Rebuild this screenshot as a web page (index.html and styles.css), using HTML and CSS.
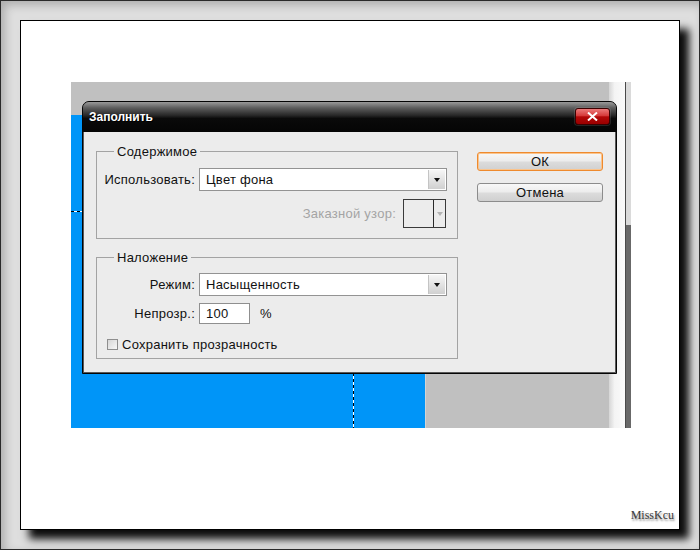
FILE: index.html
```html
<!DOCTYPE html>
<html>

<head>
    <meta charset="utf-8">
    <title>Заполнить</title>
    <link rel="stylesheet" href="styles.css">
</head>

<body>
    <div class="desk">
        <div class="paper">
            <div class="shot">
                <div class="canvas">
                    <div class="canvas-top"></div>
                    <div class="canvas-floor">
                        <div class="layer-blue"></div>
                    </div>
                    <div class="marquee"></div>
                </div>
                <div class="strip"></div>
                <div class="rule"></div>
                <div class="scroll"></div>

                <div class="dialog">
                    <div class="dialog-title">
                        <span>Заполнить</span>
                        <button class="close">
                            <svg width="11" height="9" viewBox="0 0 11 9">
                                <path d="M1 0.5 L10 8.5 M10 0.5 L1 8.5" stroke="#fff" stroke-width="2" fill="none" />
                            </svg>
                        </button>
                    </div>
                    <div class="dialog-body">
                        <div class="groups">
                            <fieldset class="group">
                                <legend>Содержимое</legend>
                                <div class="form form-content">
                                    <label>Использовать:</label>
                                    <div class="select"><span>Цвет фона</span><i class="arrow"></i></div>
                                    <div class="pattern-row">
                                        <span class="muted">Заказной узор:</span>
                                        <div class="pattern">
                                            <span class="pattern-swatch"></span>
                                            <span class="pattern-arrow"></span>
                                        </div>
                                    </div>
                                </div>
                            </fieldset>
                            <fieldset class="group">
                                <legend>Наложение</legend>
                                <div class="form form-blend">
                                    <label>Режим:</label>
                                    <div class="select"><span>Насыщенность</span><i class="arrow"></i></div>
                                    <label>Непрозр.:</label>
                                    <div class="opacity">
                                        <div class="field">100</div>
                                        <span>%</span>
                                    </div>
                                    <div class="check-row">
                                        <span class="check"></span>
                                        <span>Сохранить прозрачность</span>
                                    </div>
                                </div>
                            </fieldset>
                        </div>
                        <div class="buttons">
                            <button class="btn btn-default">ОК</button>
                            <button class="btn">Отмена</button>
                        </div>
                    </div>
                </div>
            </div>
            <div class="mark">MissKcu</div>
        </div>
    </div>
</body>

</html>
```

FILE: styles.css
```css
* {
    box-sizing: border-box;
}

body {
    margin: 0;
    font-family: "Liberation Sans", Arial, sans-serif;
    font-size: 13px;
    color: #111;
}

.desk {
    width: 700px;
    height: 550px;
    padding: 19px;
    border: 1px solid #2a2a2a;
    background: #dedede;
    box-shadow: inset 4px 4px 10px rgba(0, 0, 0, 0.22);
}

.paper {
    display: flex;
    flex-direction: column;
    width: 660px;
    height: 510px;
    padding: 61px 0 0 50px;
    border: 1px solid #000;
    background: #fff;
    box-shadow: 9px 9px 8px rgba(0, 0, 0, 0.95);
}

.mark {
    margin: auto 5px 6px auto;
    font-family: "Liberation Serif", "Times New Roman", serif;
    font-size: 12px;
    color: #3a3a3a;
    text-shadow: 1px 2px 2px rgba(0, 0, 0, 0.45);
}

/* screenshot of the workspace */

.shot {
    position: relative;
    display: flex;
    width: 560px;
    height: 346px;
}

.canvas {
    position: relative;
    display: flex;
    flex-direction: column;
    width: 538px;
    background: #c0c0c0;
}

.canvas-top {
    height: 33px;
}

.canvas-floor {
    flex: 1;
}

.layer-blue {
    width: 355px;
    height: 100%;
    background: #0095f8;
    border-right: 1px solid #d4d4d4;
}

.marquee {
    position: absolute;
    left: 0;
    top: 129px;
    width: 283px;
    bottom: 0;
    background:
        repeating-linear-gradient(90deg, #000 0 3px, #fff 3px 6px) top left / 100% 1px no-repeat,
        repeating-linear-gradient(#000 0 3px, #fff 3px 6px) top right / 1px 100% no-repeat;
}

.strip {
    width: 16px;
    background: linear-gradient(to right, #d6d6d6, #f4f4f4 35%, #fafafa);
}

.rule {
    width: 1px;
    background: #4a4a4a;
}

.scroll {
    width: 5px;
    background: linear-gradient(#dadada 0 143px, #686868 143px);
}

/* dialog */

.dialog {
    position: absolute;
    left: 11px;
    top: 19px;
    width: 535px;
    height: 273px;
    display: flex;
    flex-direction: column;
    padding: 0 1px 1px;
    border: 1px solid #050505;
    border-radius: 7px 7px 0 0;
    background: #585858;
    overflow: hidden;
}

.dialog-title {
    display: flex;
    justify-content: space-between;
    align-items: center;
    height: 30px;
    margin: 0 -1px;
    padding: 0 6px 1px 6px;
    background: linear-gradient(#9a9a9a 0, #5c5c5c 20%, #262626 45%, #0a0a0a 55%, #050505 100%);
    color: #fff;
    font-weight: bold;
    font-size: 12px;
    text-shadow: 1px 1px 0 #000;
}

.close {
    display: flex;
    justify-content: center;
    align-items: center;
    width: 35px;
    height: 17px;
    padding: 0;
    border: 1px solid #3c0000;
    border-radius: 3px;
    background: linear-gradient(#ec7a7a 0, #d53a3a 45%, #b30808 52%, #9a0000 100%);
    box-shadow: 0 0 0 1px rgba(255, 255, 255, 0.12);
}

.dialog-body {
    flex: 1;
    display: flex;
    padding: 12px 12px 0 12px;
    background: #ececec;
    letter-spacing: 0.25px;
}

.groups {
    display: flex;
    flex-direction: column;
    gap: 11px;
    width: 362px;
}

.group {
    margin: 0;
    padding: 0;
    border: 1px solid #a3a3a3;
}

.group legend {
    margin-left: 17px;
    padding: 0 3px;
    line-height: 15px;
}

.form {
    display: grid;
    grid-template-columns: 92px 248px;
    column-gap: 4px;
    align-items: center;
    padding: 9px 10px 10px 6px;
}

.form label {
    text-align: right;
}

.form-content {
    row-gap: 8px;
}

.form-blend {
    row-gap: 7px;
    padding: 8px 10px 6px 6px;
}

.select {
    display: flex;
    align-items: center;
    height: 23px;
    padding: 0 1px 0 6px;
    border: 1px solid #939393;
    background: #fff;
}

.select span {
    flex: 1;
}

.arrow {
    display: flex;
    justify-content: center;
    align-items: center;
    width: 17px;
    height: 19px;
    border-left: 1px solid #c4c4c4;
    background: linear-gradient(#f6f6f6, #d0d0d0);
}

.arrow::after {
    content: "";
    border-left: 3.5px solid transparent;
    border-right: 3.5px solid transparent;
    border-top: 4px solid #111;
}

.pattern-row {
    grid-column: 1 / -1;
    display: flex;
    justify-content: flex-end;
    align-items: center;
    gap: 7px;
    padding-right: 1px;
}

.muted {
    color: #a4a4a4;
}

.pattern {
    display: flex;
    width: 43px;
    height: 29px;
    border: 1px solid #3a3a3a;
    background: #ececec;
}

.pattern-swatch {
    width: 30px;
    border-right: 1px solid #2a2a2a;
}

.pattern-arrow {
    flex: 1;
    display: flex;
    justify-content: center;
    align-items: center;
}

.pattern-arrow::after {
    content: "";
    border-left: 3px solid transparent;
    border-right: 3px solid transparent;
    border-top: 4px solid #b4b4b4;
}

.opacity {
    display: flex;
    align-items: center;
    gap: 10px;
}

.field {
    width: 51px;
    height: 21px;
    padding: 2px 6px;
    border: 1px solid #8f8f8f;
    background: #fff;
}

.check-row {
    grid-column: 1 / -1;
    display: flex;
    align-items: center;
    gap: 4px;
    margin-top: 5px;
    padding-left: 4px;
    height: 16px;
}

.check {
    width: 11px;
    height: 11px;
    border: 1px solid #8e8e8e;
    background: linear-gradient(135deg, #d6d6d6, #f8f8f8);
}

.buttons {
    display: flex;
    flex-direction: column;
    gap: 12px;
    width: 126px;
    margin: 8px 0 0 auto;
}

.btn {
    height: 19px;
    padding: 0;
    border: 1px solid #8c8c8c;
    border-radius: 3px;
    background: linear-gradient(#f8f8f8 0, #ececec 48%, #dcdcdc 52%, #d0d0d0 100%);
    font-family: inherit;
    font-size: 13px;
    letter-spacing: 0.25px;
    color: #111;
}

.btn-default {
    border-color: #ee8a2e;
    box-shadow: inset 0 0 0 1px #fbc48c;
}
```
